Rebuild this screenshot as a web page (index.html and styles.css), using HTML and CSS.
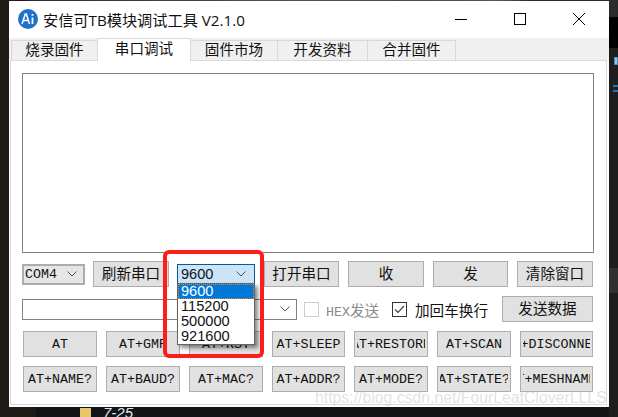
FILE: index.html
```html
<!DOCTYPE html>
<html lang="zh">
<head>
<meta charset="utf-8">
<title>安信可TB模块调试工具 V2.1.0</title>
<link rel="stylesheet" href="styles.css">
</head>
<body>
<div class="desktop">
  <div class="window">
    <header class="titlebar">
      <svg class="logo" width="20" height="20" viewBox="0 0 20 20"><circle cx="10" cy="10" r="10" fill="#1f72c8"/><path d="M4 15 7.300 5h1L11.500 15M5.300 11.500h4.500" fill="none" stroke="#fff" stroke-width="1.500"/><path d="M14.500 8.500V15M14.500 5v1.700" fill="none" stroke="#fff" stroke-width="1.800"/></svg>
      <span class="title">安信可TB模块调试工具 V2.1.0</span>
      <div class="controls">
        <svg width="12" height="12" viewBox="0 0 12 12"><path d="M0 6.500h12" stroke="#000" fill="none"/></svg>
        <svg width="12" height="12" viewBox="0 0 12 12"><rect x=".5" y=".5" width="11" height="11" stroke="#000" fill="none"/></svg>
        <svg width="12" height="12" viewBox="0 0 12 12"><path d="M0 0l12 12M12 0 0 12" stroke="#000" fill="none"/></svg>
      </div>
    </header>
    <nav class="tabs">
      <span class="tab tab-first">烧录固件</span>
      <span class="tab tab-active">串口调试</span>
      <span class="tab tab-market">固件市场</span>
      <span class="tab tab-docs">开发资料</span>
      <span class="tab tab-merge">合并固件</span>
    </nav>
    <main class="panel">
      <div class="output"></div>
      <div class="row row-serial">
        <div class="select select-com"><span class="mono">COM4</span><svg class="chev" width="10" height="6" viewBox="0 0 10 6"><path d="M.5.5 5 5 9.500.5" fill="none" stroke="#555"/></svg></div>
        <button class="btn btn-refresh">刷新串口</button>
        <div class="select select-baud"><span>9600</span><svg class="chev" width="10" height="6" viewBox="0 0 10 6"><path d="M.5.5 5 5 9.500.5" fill="none" stroke="#555"/></svg></div>
        <button class="btn btn-open">打开串口</button>
        <button class="btn btn-recv">收</button>
        <button class="btn btn-send">发</button>
        <button class="btn btn-clear">清除窗口</button>
      </div>
      <div class="row row-send">
        <div class="select select-input"><svg class="chev" width="10" height="6" viewBox="0 0 10 6"><path d="M.5.5 5 5 9.500.5" fill="none" stroke="#555"/></svg></div>
        <label class="check check-disabled"><span class="box"></span><span><span class="mono">HEX</span>发送</span></label>
        <label class="check check-on"><span class="box"><svg width="11" height="9" viewBox="0 0 11 9"><path d="M1 4.500 4 7.500 10 1" fill="none" stroke="#444" stroke-width="1.200"/></svg></span><span>加回车换行</span></label>
        <button class="btn btn-data">发送数据</button>
      </div>
      <div class="at-grid">
        <button class="btn at"><span class="clip">AT</span></button>
        <button class="btn at"><span class="clip">AT+GMR</span></button>
        <button class="btn at"><span class="clip">AT+RST</span></button>
        <button class="btn at"><span class="clip">AT+SLEEP</span></button>
        <button class="btn at"><span class="clip">AT+RESTORE</span></button>
        <button class="btn at"><span class="clip">AT+SCAN</span></button>
        <button class="btn at"><span class="clip">AT+DISCONNECT</span></button>
        <button class="btn at"><span class="clip">AT+NAME?</span></button>
        <button class="btn at"><span class="clip">AT+BAUD?</span></button>
        <button class="btn at"><span class="clip">AT+MAC?</span></button>
        <button class="btn at"><span class="clip">AT+ADDR?</span></button>
        <button class="btn at"><span class="clip">AT+MODE?</span></button>
        <button class="btn at"><span class="clip">AT+STATE?</span></button>
        <button class="btn at"><span class="clip">AT+MESHNAME?</span></button>
      </div>
    </main>
  </div>
  <ul class="dropdown">
    <li class="item-on">9600</li>
    <li>115200</li>
    <li>500000</li>
    <li>921600</li>
  </ul>
  <div class="redbox"></div>
  <div class="strip strip-top"></div>
  <div class="strip strip-black"></div>
  <div class="strip strip-band"></div>
  <div class="desk-icon"></div>
  <div class="desk-lines"></div>
  <div class="desk-text">7-25</div>
  <div class="folder"></div>
  <div class="watermark">https://blog.csdn.net/FourLeafCloverLLLS</div>
</div>
</body>
</html>
```
FILE: styles.css
```css
* { box-sizing: border-box; }
html, body { margin: 0; padding: 0; }
body { width: 618px; height: 417px; overflow: hidden; }
.desktop {
  position: relative;
  width: 618px;
  height: 417px;
  overflow: hidden;
  padding: 1px 0 0 9px;
  background: linear-gradient(90deg, #1f1b17 0, #1f1b17 36px, #141416 36px, #141416 609px, #1e1e1e 609px);
  font-family: "Noto Sans CJK SC", "Liberation Sans", sans-serif;
  font-size: 14.6px;
  color: #111;
}
.window { width: 600px; height: 406px; background: #fff; display: flex; flex-direction: column; }
.titlebar { height: 37px; flex: none; display: flex; align-items: center; padding: 0 0 1px 9px; }
.logo { flex: none; margin-right: 5px; }
.title { font-family: "Open Sans", "Noto Sans CJK SC", sans-serif; font-size: 15.2px; color: #111; white-space: nowrap; }
.controls { margin-left: auto; display: flex; gap: 47px; padding-right: 24px; align-items: center; }
.controls svg { display: block; }
.tabs { height: 22px; flex: none; background: #f0f0f0; display: flex; padding-left: 2px; align-items: flex-end; }
.tab { width: 88px; height: 20px; background: #f0f0f0; border: 1px solid #d9d9d9; border-bottom: 0; margin-left: -1px; padding-bottom: 2px; display: flex; align-items: center; justify-content: center; line-height: 1; }
.tab-first { margin-left: 0; width: 87px; }
.tab-active { width: 94px; height: 23px; background: #fff; position: relative; z-index: 1; margin-bottom: -1px; padding-bottom: 4px; }
.tab-market { width: 88px; }
.tab-docs { width: 91px; }
.tab-merge { width: 89px; }
.panel { flex: 1; margin: 0 2px 2px 1px; border: 1px solid #d9d9d9; background: #fff; padding: 12px 0 0 11px; }
.output { width: 572px; height: 180px; border: 1px solid #828282; background: #fff; }
.row { display: flex; align-items: center; width: 571px; height: 26px; }
.row-serial { margin-top: 8px; }
.row-send { margin-top: 9px; }
.btn { font: inherit; color: #111; background: #e1e1e1; border: 1px solid #adadad; padding: 0 0 1px; margin: 0; height: 26px; white-space: nowrap; overflow: hidden; line-height: 1; display: flex; align-items: center; justify-content: center; flex: none; }
.select { height: 21px; flex: none; border: 1px solid #acacac; background: #e6e6e6; display: flex; align-items: center; justify-content: space-between; }
.mono { font-family: "Liberation Mono", monospace; font-size: 13.3px; }
.select-com { width: 63px; padding: 0 6px 0 1px; border-width: 2px; }
.btn-refresh { width: 76px; margin-left: 8px; }
.select-baud { width: 78px; margin-left: 8px; background: #cce4f7; border-color: #005a9e; padding: 0 8px 0 3px; font-family: "Liberation Sans", sans-serif; font-size: 14.6px; }
.btn-open { width: 75px; margin-left: 9px; }
.btn-recv { width: 76px; margin-left: 9px; }
.btn-send { width: 75px; margin-left: 9px; }
.btn-clear { width: 76px; margin-left: 9px; }
.select-input { width: 275px; background: #fff; border-color: #828282; justify-content: flex-end; padding-right: 6px; }
.check { display: flex; align-items: center; flex: none; }
.box { width: 15px; height: 15px; border: 1px solid #333; display: flex; align-items: center; justify-content: center; background: #fff; flex: none; }
.check-disabled { margin-left: 7px; color: #8a8a8a; gap: 7px; width: 76px; }
.check-disabled .box { border-color: #ccc; }
.check-on { margin-left: 12px; gap: 8px; }
.btn-data { width: 91px; margin-left: auto; }
.at-grid { margin-top: 9px; margin-left: 1px; display: grid; grid-template-columns: 74px 74px 74px 73px 74px 74px 73px; column-gap: 9px; row-gap: 9px; grid-auto-rows: 26px; }
.at { width: 100%; font-family: "Liberation Mono", monospace; font-size: 13.3px; padding: 2px 0 0; font-weight: 400; }
.clip { display: flex; justify-content: center; width: calc(100% - 4px); overflow: hidden; white-space: pre; }
.dropdown { position: absolute; left: 177px; top: 283px; width: 78px; height: 62px; margin: 0; padding: 0; list-style: none; background: #fff; border: 1px solid #646464; box-shadow: 3px 3px 4px rgba(0,0,0,.45); font-family: "Liberation Sans", sans-serif; font-size: 14.6px; line-height: 15px; }
.dropdown li { height: 15px; padding-left: 3px; }
.dropdown .item-on { background: #0078d7; color: #fff; outline: 1px dotted #e08a3a; outline-offset: -1px; }
.redbox { position: absolute; left: 163px; top: 250px; width: 101px; height: 108px; border: 4px solid #fb1f17; border-radius: 6px; }
.strip { position: absolute; }
.strip-top { left: 0; top: 0; width: 618px; height: 1px; background: linear-gradient(90deg, #1f1b17 0, #1f1b17 26px, #2c2a28 26px, #5d5047 300px, #4e4452 400px, #5c5162 500px, #2a2a2a 530px); }
.strip-black { left: 609px; top: 0; width: 9px; height: 48px; background: linear-gradient(#2b2b2b 0, #2b2b2b 17px, #000 17px); }
.strip-band { left: 609px; top: 268px; width: 9px; height: 25px; background: #303030; }
.desk-icon { position: absolute; left: 614px; top: 57px; width: 4px; height: 8px; background: #9cc3de; border: 1px solid #4b8cc0; }
.desk-lines { position: absolute; left: 613px; top: 85px; width: 5px; height: 7px; border-top: 2px solid #2a6fb8; border-bottom: 2px solid #2a6fb8; }
.desk-text { position: absolute; left: 103px; top: 405px; color: #dfe6ee; font-family: "Liberation Sans", sans-serif; font-size: 15px; font-style: italic; line-height: 16px; }
.folder { position: absolute; left: 80px; top: 408px; width: 11px; height: 9px; background: #e8c66a; }
.watermark { position: absolute; left: 315px; top: 389px; color: rgba(185,185,185,.42); font-family: "Liberation Sans", sans-serif; font-size: 15.8px; line-height: 18px; white-space: nowrap; }
```
